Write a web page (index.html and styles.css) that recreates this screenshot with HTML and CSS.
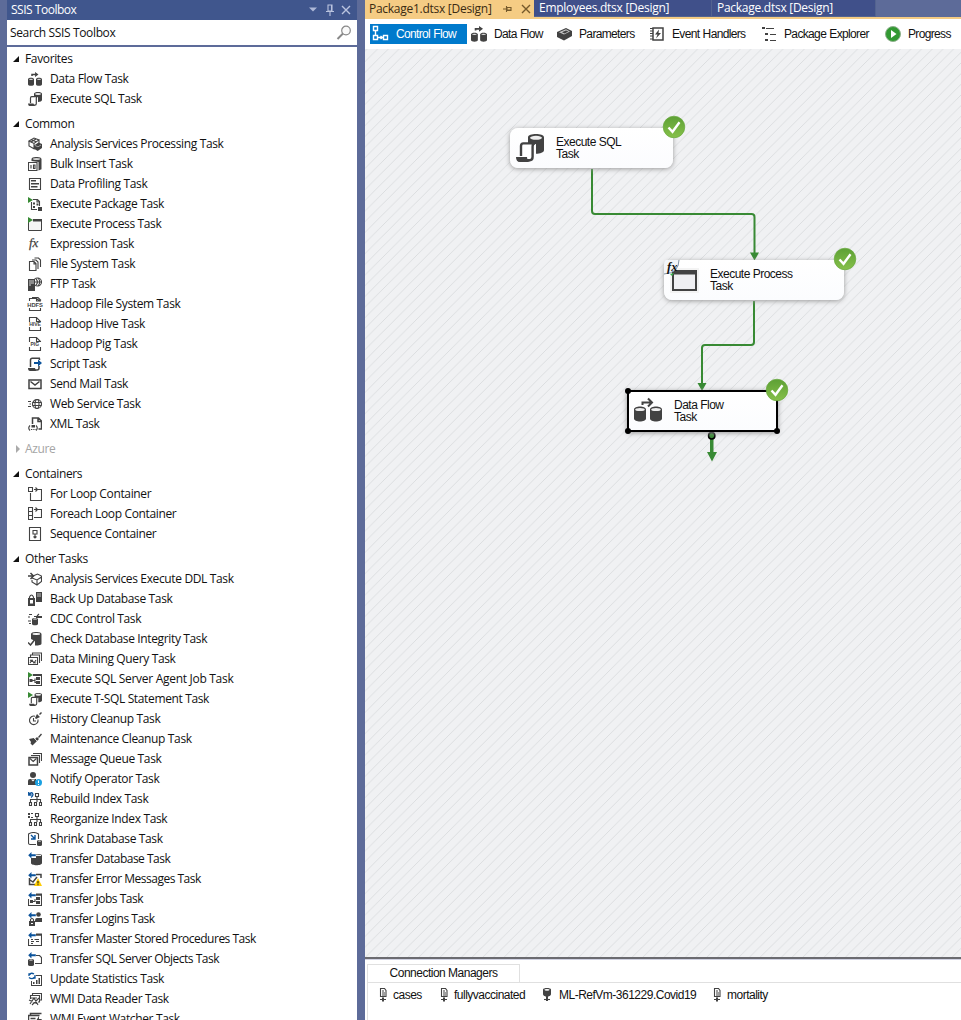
FILE: index.html
```html
<!DOCTYPE html>
<html lang="en">
<head>
<meta charset="utf-8">
<title>SSIS Designer</title>
<link rel="stylesheet" href="styles.css">
</head>
<body>
<svg class="defs" width="0" height="0">
  <defs>
    <linearGradient id="ok" x1="0" y1="0" x2="0" y2="1"><stop offset="0" stop-color="#5da035"/><stop offset="1" stop-color="#86c04a"/></linearGradient>
    <pattern id="hatch" width="10.667" height="10.667" patternUnits="userSpaceOnUse"><path d="M-2 12.667L12.667-2M-2 2L2-2M8.667 12.667l4-4" stroke="#d9dbdd" stroke-width=".9"/></pattern>
  </defs>
  <symbol id="arrow" viewBox="0 0 7 6"><path d="M7 2H3V0L0 3l3 3V4h4z" fill="#0b539b"/></symbol>
  <symbol id="dataflow" viewBox="0 0 14 14"><path d="M4 4V2.500h4" class="s2"/><path d="M7 0l3.500 2.500L7 5V3.400L8 2.500 7 1.600z"/><path d="M0 7.300c0-2 6-2 6 0v5c0 2-6 2-6 0zM8 7.300c0-2 6-2 6 0v5c0 2-6 2-6 0z"/><ellipse cx="3" cy="7.300" rx="2" ry=".6" fill="#ddd"/><ellipse cx="11" cy="7.300" rx="2" ry=".6" fill="#ddd"/></symbol>
  <symbol id="sql" viewBox="0 0 14 14"><path d="M6 1.700C6-.5 14-.5 14 1.700V8c0 1.300-2 1.900-4 1.900V5H6z"/><ellipse cx="10" cy="1.900" rx="3" ry="1" fill="#eee"/><path d="M2.500 11V6q0-1.300 1.200-1.300H9.500q-1.200.2-1.200 1.500v5.200q0 1.700-1.400 1.700H1.200" fill="#fff" stroke="#424242" stroke-width="1.200"/><path d="M0 11.500h5.500q0 1.700 1.700 1.900L6 14H2Q0 14 0 11.500z"/></symbol>
  <symbol id="cube" viewBox="0 0 14 14"><path d="M1 4l5-3 5 2-5 3.400zM1 4v5l5 2.800V6.400M11 3v4" class="s"/><path d="M3 2.600l5 2.200M8 2L3 5" class="s"/><path d="M6 8.400l4.500-3L14 7v4l-4.300 3L6 11.700z"/><path d="M7 8.500l3 1.300L13 8" stroke="#fff" stroke-width=".5" fill="none"/></symbol>
  <symbol id="bulk" viewBox="0 0 14 14"><path d="M3.500 4V2c0-2.700 10-2.700 10 0v10.200l-3 1.300V5z"/><ellipse cx="8.500" cy="2" rx="3.800" ry=".8" fill="#fff"/><path d="M.5 5.500h8.500v8H.5zM3 8v3.500" class="s"/><path d="M5.500 8h1.500v3.500H5.500z" class="s"/></symbol>
  <symbol id="profile" viewBox="0 0 14 14"><path d="M1.500 1.500h11v11h-11z" class="s"/><path d="M3 3h5v1.500H3zM3 6h8v1.500H3zM3 9h6.500v1.500H3z"/></symbol>
  <symbol id="play" viewBox="0 0 5 6"><path d="M0 0l5 3L0 6z" fill="#388a34"/></symbol>
  <symbol id="package" viewBox="0 0 14 14"><path d="M3.500 5v7.500H9M5 2.500h4.500l2 2V9M9 2.500V5h3" class="s"/><path d="M5 5.500h2v2H5zM8.500 6.500h2v2h-2zM5 9h2v2H5zM10 10h4v4h-4z"/><use href="#play" width="5" height="6"/></symbol>
  <symbol id="process" viewBox="0 0 14 14"><path d="M.5 5v8.500h13V3H5" fill="#f5f5f5" stroke="#424242"/><path d="M5 2h9v2.500H5z"/><use href="#play" width="5" height="6"/></symbol>
  <symbol id="files" viewBox="0 0 14 14"><path d="M1.500 4.500h4.500l2 2v7h-6.500zM6 4.500v2.500h2M4 3h4l2 2v7M6.500 1h4l2 2v7" class="s"/></symbol>
  <symbol id="ftp" viewBox="0 0 14 14"><circle cx="9.500" cy="5" r="4" class="s"/><path d="M7 5h6M10 1q3.500 4 0 8M8 2q3 3 0 6" class="s"/><path d="M0 2h7v12H0z"/><path d="M1 4h5M1 6h5M1 8h2" stroke="#fff" stroke-width=".8"/></symbol>
  <symbol id="script" viewBox="0 0 14 14"><path d="M2.500 10V3q0-1.700 1.700-1.700H12M11.500 3V1.500M11 9v2q0 2-2 2H2" class="s2"/><path d="M0 11h7l1 3H2q-2 0-2-3z"/><path d="M6 5h4V2.500L14 6l-4 3.500V7H6z" fill="#0b539b"/></symbol>
  <symbol id="mail" viewBox="0 0 14 14"><path d="M1 3h12v8.500H1z" class="s2"/><path d="M2.500 4.500L7 8l4.500-3.500" class="s2"/></symbol>
  <symbol id="web" viewBox="0 0 14 14"><circle cx="9" cy="7" r="4.500" class="s"/><ellipse cx="9" cy="7" rx="2" ry="4.500" class="s"/><path d="M4.500 5.500h9M4.500 8.500h9M0 4.500h3M1.500 7H3M0 9.500h3" class="s"/></symbol>
  <symbol id="xml" viewBox="0 0 14 14"><path d="M4.500 7V1h6l3 3v8h-3M10 1v3.500h3" class="s2"/><path d="M2 8.500Q-.5 11 2 13.500M8 8.500q2.500 2.500 0 5" class="s"/><path d="M3.500 8H7v2.500H3.500zM3 12h1v1H3zM4.700 12h1v1h-1zM6.500 12h1v1h-1z"/></symbol>
  <symbol id="for" viewBox="0 0 14 14"><path d="M.5.500h4v4h-4zM6 2.500h7.500v11h-11V6M7.500.500l2 2-2 2" class="s"/></symbol>
  <symbol id="foreach" viewBox="0 0 14 14"><path d="M.5.500h4v12h-4zM.5 4.500h4M.5 8.500h4M6 2.500h7.500v8H6M7.500.500l2 2-2 2" class="s"/></symbol>
  <symbol id="sequence" viewBox="0 0 14 14"><path d="M1.500.500h11v13h-11zM5 3.500h4v3.500H5zM7 7v4M5.500 9.500L7 11l1.500-1.500" class="s"/></symbol>
  <symbol id="ddl" viewBox="0 0 14 14"><path d="M5 4l4.500-2L13.500 4v5.500L9 13l-5-3V8M4 6l5 2 4.500-3M9 8v5" class="s"/><path d="M0 4h5M2.500 1l3 3-3 3" class="s2"/></symbol>
  <symbol id="backup" viewBox="0 0 14 14"><path d="M0 6h7v8H0z"/><path d="M1.500 6V5q2-4 4 0v1" class="s"/><path d="M2 8h3v3.500H2z" fill="#fff"/><path d="M8 0h6v10H8z"/><path d="M9 2h4M9 4h4" stroke="#fff" stroke-width=".7"/></symbol>
  <symbol id="cdc" viewBox="0 0 14 14"><path d="M1 2.500h3M0 5h2M0 9h3M1 11.500h2M6 4.500h7.500M9 4l2-2" class="s"/><path d="M4 7c0-1.500 6-1.500 6 0v5c0 1.700-6 1.700-6 0zM8 4h6v2H8z"/><ellipse cx="7" cy="7" rx="2" ry=".6" fill="#fff"/></symbol>
  <symbol id="check-db" viewBox="0 0 14 14"><path d="M3 2c0-2.700 10.500-2.700 10.500 0v9.500c0 2-5 2-6.500 2V9L3 7z"/><ellipse cx="8.300" cy="2" rx="3.800" ry=".9" fill="#fff"/><path d="M0 10.500l2.500 2.500L6.500 8" class="s2"/></symbol>
  <symbol id="mining" viewBox="0 0 14 14"><path d="M.5 5.500h9v7h-9zM2.500 5V3h9v8M4.500 3V1h9v8" class="s"/><path d="M2 11l2-3 2 3 2-3M2 8l6 3" class="s"/></symbol>
  <symbol id="agent" viewBox="0 0 14 14"><path d="M.5 5v8.500h13V3H5" class="s"/><path d="M5 2h9v2H5zM1.500 7h3v3h-3zM8 5h4v3H8zM8 9h4v3H8z"/><path d="M4 8.500h3M7 6.500v4h2" class="s"/><use href="#play" width="5" height="6"/></symbol>
  <symbol id="tsql" viewBox="0 0 14 14"><use href="#sql" x="1" y="1" width="13" height="13"/><use href="#play" width="5" height="6"/></symbol>
  <symbol id="history" viewBox="0 0 14 14"><path d="M10 7.500A4.300 4.300 0 1 1 7 4.200M5.500 6v3H8" class="s"/><path d="M7 6l2-4 3 3-4 2zM11 2l2-2 1 1-2 2z"/></symbol>
  <symbol id="maintenance" viewBox="0 0 14 14"><path d="M1 7l5-1 3 3-3 3-1.500 1.500-2-2L3 10z"/><path d="M7 7l2-2 2 2-2 2zM10 5l3-3.500 1 1L11 6z"/><path d="M5.500 5.500l4.500 4.500" stroke="#fff" stroke-width=".7"/></symbol>
  <symbol id="queue" viewBox="0 0 14 14"><path d="M1 5.500h8.500V13H1z" class="s2"/><path d="M2 6.500l3.200 3 3.200-3M3 3.500h8.500V11M5 1.500h8.500V9" class="s"/></symbol>
  <symbol id="operator" viewBox="0 0 14 14"><circle cx="5" cy="3" r="3"/><path d="M0 13V9q0-2 2-2h6v6z"/><path d="M3 7.500l2 2 2-2" fill="#fff"/><circle cx="10.500" cy="10.500" r="3.500" fill="#1ba1e2"/><path d="M10 8.500h1v2.500h-1zM10 12h1v1h-1z" fill="#fff"/></symbol>
  <symbol id="tree" viewBox="0 0 14 14"><path d="M7.500 1.500h3v3h-3zM1.500 10.500h2v3h-2zM6.500 10.500h2v3h-2zM11.500 10.500h2v3h-2zM9 5v5M2.500 10V7.500h10V10" class="s"/></symbol>
  <symbol id="rebuild" viewBox="0 0 14 14"><use href="#tree" width="14" height="14"/><path d="M.700 0v3h3M1 2.500Q4-1 5 2.500 5 4 3 5.500" fill="none" stroke="#0b539b" stroke-width="1.300"/></symbol>
  <symbol id="reorganize" viewBox="0 0 14 14"><use href="#tree" width="14" height="14"/><path d="M0 1h2v2H0zM3 1h2v1H3zM0 4h2v2H0zM3 5h2v1H3z"/></symbol>
  <symbol id="shrink" viewBox="0 0 14 14"><path d="M8 12.500H2Q.5 12.500.5 11V2Q3 .5 5.500.5t5 1.500v5" class="s"/><path d="M3 3l3.500 3.500M7 3v4H3" fill="none" stroke="#0b539b" stroke-width="1.400"/><path d="M9 9c0-1.500 5-1.500 5 0v4c0 1.300-5 1.300-5 0z"/><ellipse cx="11.500" cy="9" rx="1.500" ry=".5" fill="#fff"/></symbol>
  <symbol id="t-db" viewBox="0 0 14 14"><path d="M3 6h5V2.500q6-1 6 1V11c0 3-11 3-11 0z"/><path d="M8 3.500h5" stroke="#eee"/><use href="#arrow" width="8" height="6.500"/></symbol>
  <symbol id="t-error" viewBox="0 0 14 14"><path d="M1.500 6v6.500H7M8 2.500h5V6M2 8l3 2 4-5" class="s2"/><path d="M10 6l4 8H6z" fill="#fc0"/><path d="M9.500 9h1v2.500h-1zM9.500 12.200h1v1h-1z" fill="#111"/><use href="#arrow" width="8" height="6.500"/></symbol>
  <symbol id="t-jobs" viewBox="0 0 14 14"><path d="M.5 7v6.500h13V3H8" class="s"/><path d="M8 1.500h6v2H8zM2 8h3v3H2zM8 5h4v3H8zM8 9h4v3H8z"/><path d="M5 9.500h2V7" class="s"/><use href="#arrow" width="8" height="6.500"/></symbol>
  <symbol id="t-logins" viewBox="0 0 14 14"><circle cx="10.500" cy="2.500" r="2.300"/><path d="M7 9q0-3 2-3h5v4H7zM1 9h6v5H1z"/><path d="M2.500 9V7.500q1.500-2 3 0V9" class="s"/><path d="M3 11h2v1H3z" fill="#fff"/><use href="#arrow" width="8" height="6.500"/></symbol>
  <symbol id="t-master" viewBox="0 0 14 14"><path d="M.5 7v6.500h13V3H8M3 7.500h2M6.500 7.500H11M3 9.500h3M8 9.500h3M3 11.500h2" class="s"/><path d="M8 1.500h6v2H8z"/><use href="#arrow" width="8" height="6.500"/></symbol>
  <symbol id="t-objects" viewBox="0 0 14 14"><path d="M0 8c0-1.500 6-1.500 6 0v5c0 1.500-6 1.500-6 0z"/><path d="M8 3.500h3.500l2 2v6H7" class="s"/><ellipse cx="3" cy="8" rx="1.800" ry=".5" fill="#fff"/><use href="#arrow" width="8" height="6.500"/></symbol>
  <symbol id="stats" viewBox="0 0 14 14"><path d="M8 3h6v11H3V9h1v4h9V4H8zM5 10h1.500v2H5zM8 8h1.500v4H8zM10.500 6H12v6h-1.500z"/><path d="M1 4V2h2M1 3q2-3 5-1M7 3v3H5M7 5Q4 8 1 5.500" fill="none" stroke="#0b539b" stroke-width="1.300"/></symbol>
  <symbol id="wmi" viewBox="0 0 14 14"><path d="M4.500 4V1.500h9V8H11M2.500 7V3.500h9V10H10" class="s"/><path d="M2 12l4-6 4 7M1 8l9 4M4 13l7-7M2 6h7" class="s"/></symbol>
  <symbol id="wmi-event" viewBox="0 0 14 14"><path d="M2.500 3.500V1.500h11M6 12H.5V3.500h11M2.500 6.500h5M2.500 9h4" class="s2"/><path d="M11 4l-3 5h3l-1 4 4-6h-3z"/></symbol>
  <symbol id="control" viewBox="0 0 17 17"><path d="M1.500 1.500h4v4h-4zM1.500 10.500h4v4h-4zM11.500 10.500h4v4h-4zM3.500 6v4M6 12.500h4.500M8.500 11l2 1.500-2 1.500" fill="none" stroke="#fff" stroke-width="1.400"/></symbol>
  <symbol id="params" viewBox="0 0 16 14"><path d="M0 5l9-4 6 3v5l-8 4.500-7-3.500z"/><path d="M2 5.300l7-3L13 4.500 7 7.500z" fill="#c6c6c6"/><path d="M5 5.300l4-1.800 2.500 1-4 2z"/></symbol>
  <symbol id="events" viewBox="0 0 14 14"><path d="M3 1h10v12H3z" class="s2"/><path d="M0 1.500h3M0 4h3M0 6.500h3M0 9h3M0 12h3" class="s"/><path d="M9 2.500L5 7.500h2.500L6 11.500l5-5.500H8.500z"/></symbol>
  <symbol id="explorer" viewBox="0 0 14 14"><path d="M0 0h3v2H0zM3 6h3v2H3zM3 12h3v2H3z"/><path d="M4 1.500h8M8 7.500h6M8 13.500h6" class="s"/></symbol>
  <symbol id="progress" viewBox="0 0 16 16"><circle cx="8" cy="8" r="7.500" fill="#329932" stroke="#8eb08d"/><path d="M6 4l5.500 4L6 12z" fill="#fff"/></symbol>
  <symbol id="conn-file" viewBox="0 0 8 14"><path d="M1.500.5h4l1.500 2V8.500H1.500zM3 3h2M3 5h3M3 7h3M4 9v4M1 11.500h6" class="s"/><path d="M3 10h2v3.500H3z"/></symbol>
  <symbol id="conn-db" viewBox="0 0 8 14"><path d="M0 1.500c0-2 8-2 8 0V6c0 2-3 2.500-3 2.500V13H3V8.500S0 8 0 6z"/><ellipse cx="4" cy="1.800" rx="2.600" ry=".9" fill="#fff"/><path d="M1 11.500h6" class="s"/></symbol>
  <symbol id="done" viewBox="0 0 24 24"><circle cx="12" cy="12" r="10.800" fill="url(#ok)" stroke="#68a93d" stroke-width=".7"/><path d="M6.500 12.500l4 4.300 7-9.500" fill="none" stroke="#fff" stroke-width="2.400"/></symbol>
</svg>

<div class="app">
  <aside class="toolbox">
    <header class="titlebar"><span>SSIS Toolbox</span>
      <svg class="title-icons" viewBox="0 0 44 12"><path d="M0 3.500h8l-4 4z" fill="#aeb9d8"/><path d="M19 1h4v6h-4zM17 7.500h8M21 8v4M22.500 1v6" fill="none" stroke="#bac4df" stroke-width="1.100"/><path d="M33 2l8 8M41 2l-8 8" stroke="#bac4df" stroke-width="1.400"/></svg>
    </header>
    <div class="search"><span>Search SSIS Toolbox</span><svg width="16" height="16" viewBox="0 0 16 16"><circle cx="10" cy="5.500" r="4.300" fill="#fafafa" stroke="#888" stroke-width="1.200"/><path d="M7 8.500L1.500 14" stroke="#888" stroke-width="2"/></svg></div>
    <nav class="list">
      <section><h2>Favorites</h2><ul>
        <li><svg><use href="#dataflow"/></svg>Data Flow Task</li>
        <li><svg><use href="#sql"/></svg>Execute SQL Task</li>
      </ul></section>
      <section><h2>Common</h2><ul>
        <li><svg><use href="#cube"/></svg>Analysis Services Processing Task</li>
        <li><svg><use href="#bulk"/></svg>Bulk Insert Task</li>
        <li><svg><use href="#profile"/></svg>Data Profiling Task</li>
        <li><svg><use href="#package"/></svg>Execute Package Task</li>
        <li><svg><use href="#process"/></svg>Execute Process Task</li>
        <li><svg viewBox="0 0 14 14"><text class="fx" x="1" y="10">fx</text></svg>Expression Task</li>
        <li><svg><use href="#files"/></svg>File System Task</li>
        <li><svg><use href="#ftp"/></svg>FTP Task</li>
        <li><svg viewBox="0 0 14 14"><path d="M1.500 4V1.500h7l4 3M1.500 11v2.500h11V11M8.500 1.500V4h4M4 .5h6l3 3" class="s"/><text class="tag" x="-.8" y="10" font-size="5.800">HDFS</text></svg>Hadoop File System Task</li>
        <li><svg viewBox="0 0 14 14"><path d="M1.500 5V.5h7l4 4V5M1.500 10v3.500h11V10M8.500.5v4h4" class="s"/><text class="tag" x="1.200" y="9" font-size="5">HIVE</text></svg>Hadoop Hive Task</li>
        <li><svg viewBox="0 0 14 14"><path d="M1.500 5V.5h7l4 4V5M1.500 10v3.500h11V10M8.500.5v4h4" class="s"/><text class="tag" x="2.500" y="9" font-size="5">PIG</text></svg>Hadoop Pig Task</li>
        <li><svg><use href="#script"/></svg>Script Task</li>
        <li><svg><use href="#mail"/></svg>Send Mail Task</li>
        <li><svg><use href="#web"/></svg>Web Service Task</li>
        <li><svg><use href="#xml"/></svg>XML Task</li>
      </ul></section>
      <section class="closed"><h2>Azure</h2></section>
      <section><h2>Containers</h2><ul>
        <li><svg><use href="#for"/></svg>For Loop Container</li>
        <li><svg><use href="#foreach"/></svg>Foreach Loop Container</li>
        <li><svg><use href="#sequence"/></svg>Sequence Container</li>
      </ul></section>
      <section><h2>Other Tasks</h2><ul>
        <li><svg><use href="#ddl"/></svg>Analysis Services Execute DDL Task</li>
        <li><svg><use href="#backup"/></svg>Back Up Database Task</li>
        <li><svg><use href="#cdc"/></svg>CDC Control Task</li>
        <li><svg><use href="#check-db"/></svg>Check Database Integrity Task</li>
        <li><svg><use href="#mining"/></svg>Data Mining Query Task</li>
        <li class="wide"><svg><use href="#agent"/></svg>Execute SQL Server Agent Job Task</li>
        <li><svg><use href="#tsql"/></svg>Execute T-SQL Statement Task</li>
        <li><svg><use href="#history"/></svg>History Cleanup Task</li>
        <li><svg><use href="#maintenance"/></svg>Maintenance Cleanup Task</li>
        <li><svg><use href="#queue"/></svg>Message Queue Task</li>
        <li><svg><use href="#operator"/></svg>Notify Operator Task</li>
        <li><svg><use href="#rebuild"/></svg>Rebuild Index Task</li>
        <li><svg><use href="#reorganize"/></svg>Reorganize Index Task</li>
        <li><svg><use href="#shrink"/></svg>Shrink Database Task</li>
        <li class="tight"><svg><use href="#t-db"/></svg>Transfer Database Task</li>
        <li class="tight"><svg><use href="#t-error"/></svg>Transfer Error Messages Task</li>
        <li class="tight"><svg><use href="#t-jobs"/></svg>Transfer Jobs Task</li>
        <li class="tight"><svg><use href="#t-logins"/></svg>Transfer Logins Task</li>
        <li class="tight"><svg><use href="#t-master"/></svg>Transfer Master Stored Procedures Task</li>
        <li class="tight"><svg><use href="#t-objects"/></svg>Transfer SQL Server Objects Task</li>
        <li><svg><use href="#stats"/></svg>Update Statistics Task</li>
        <li><svg><use href="#wmi"/></svg>WMI Data Reader Task</li>
        <li><svg><use href="#wmi-event"/></svg>WMI Event Watcher Task</li>
      </ul></section>
    </nav>
  </aside>

  <main class="designer">
    <div class="doc-tabs">
      <div class="doc active"><span>Package1.dtsx [Design]</span><svg width="32" height="12" viewBox="0 0 32 12"><path d="M1 6h3M4.500 3v6M5 4.500h4v3H5zM5 7h4" fill="none" stroke="#75592b" stroke-width="1.100"/><path d="M20 2l8 8M28 2l-8 8" stroke="#75592b" stroke-width="1.400"/></svg></div>
      <div class="doc employees"><span>Employees.dtsx [Design]</span></div>
      <div class="doc package"><span>Package.dtsx [Design]</span></div>
    </div>
    <div class="modes">
      <div class="mode selected"><svg width="17" height="17"><use href="#control"/></svg><span>Control Flow</span></div>
      <div class="mode m-data"><svg width="16" height="16"><use href="#dataflow"/></svg><span>Data Flow</span></div>
      <div class="mode m-params"><svg width="16" height="14"><use href="#params"/></svg><span>Parameters</span></div>
      <div class="mode m-events"><svg width="14" height="14"><use href="#events"/></svg><span>Event Handlers</span></div>
      <div class="mode m-explorer"><svg width="14" height="14"><use href="#explorer"/></svg><span>Package Explorer</span></div>
      <div class="mode m-progress"><svg width="16" height="16"><use href="#progress"/></svg><span>Progress</span></div>
    </div>
    <div class="canvas">
      <svg class="wires" viewBox="365 49 596 908">
        <rect x="365" y="49" width="596" height="908" fill="url(#hatch)"/>
        <g fill="none" stroke="#388a34" stroke-width="2"><path d="M592 169v42q0 3 3 3h156.500q3 0 3 3v37"/><path d="M754 301v41q0 3-3 3h-46q-3 0-3 3v37"/></g>
        <g fill="#388a34"><path d="M750 252.500h9l-4.500 8zM697.500 383h9l-4.500 8z"/><path d="M710 438h3.500v14h3.500l-5 9.500-5-9.500h3z"/><circle cx="711.700" cy="435.800" r="3.200" stroke="#000" stroke-width="1.500"/></g>
      </svg>
      <div class="node n-sql"><svg class="pic" width="28" height="28"><use href="#sql"/></svg><span>Execute SQL<br>Task</span><svg class="done"><use href="#done"/></svg></div>
      <div class="node n-process"><svg class="pic" width="29" height="25" viewBox="0 0 29 25"><path fill="#f3f3f3" d="M0 0h29v25H0z"/><path d="M3 3h23v19H3z" fill="#efeff2" stroke="#424242" stroke-width="2"/><path d="M2 2h25v4.500H2z"/></svg><span>Execute Process<br>Task</span>
        <svg class="fx-badge" width="16" height="16" viewBox="0 0 16 16"><path d="M2 0h13q0 13-15 14V5q0-4 2-5z" fill="#f3f6fb"/><path d="M15 0q0 13-15 14" fill="none" stroke="#8293a7"/><path d="M6 14l4-1-2 3z" fill="#37b24a"/><text x="3" y="11" font-family="Liberation Serif, serif" font-style="italic" font-weight="bold" font-size="12.500" fill="#111">fx</text></svg>
        <svg class="done"><use href="#done"/></svg></div>
      <div class="node n-flow"><svg class="pic" width="29" height="26" viewBox="0 0 29 26"><path d="M8.500 7V4.500h9M14 .5l4 4-4 4" fill="none" stroke="#424242" stroke-width="2"/><path d="M0 11.500c0-4 12-4 12 0v9c0 4-12 4-12 0zM16 11.500c0-4 12-4 12 0v9c0 4-12 4-12 0z"/><ellipse cx="6" cy="11.500" rx="4.800" ry="1.600" fill="#eee"/><ellipse cx="22" cy="11.500" rx="4.800" ry="1.600" fill="#eee"/></svg><span>Data Flow<br>Task</span><i></i><i></i><i></i><svg class="done"><use href="#done"/></svg></div>
    </div>
    <div class="connections">
      <div class="conn-tab"><span>Connection Managers</span></div>
      <div class="conn-list">
        <div class="conn c1"><svg width="8" height="14"><use href="#conn-file"/></svg><span>cases</span></div>
        <div class="conn c2"><svg width="8" height="14"><use href="#conn-file"/></svg><span>fullyvaccinated</span></div>
        <div class="conn c3"><svg width="8" height="14"><use href="#conn-db"/></svg><span>ML-RefVm-361229.Covid19</span></div>
        <div class="conn c4"><svg width="8" height="14"><use href="#conn-file"/></svg><span>mortality</span></div>
      </div>
    </div>
  </main>
</div>
</body>
</html>
```

FILE: styles.css
```css
* { box-sizing: border-box; }
body { margin: 0; width: 961px; height: 1020px; overflow: hidden; background: #5d6b99; color: #111; font: 12px/20px "Open Sans", "Noto Sans", sans-serif; white-space: nowrap; }
svg { display: block; flex: none; fill: #424242; overflow: visible; }
.defs { position: absolute; }
.s { fill: none; stroke: #424242; stroke-width: 1.1; }
.s2 { fill: none; stroke: #424242; stroke-width: 1.5; }
.fx { font: italic 13px "Liberation Serif", serif; stroke: #424242; stroke-width: .25; letter-spacing: 0; }
.tag { font-family: "Liberation Sans", Arial, sans-serif; font-weight: bold; letter-spacing: 0; }
.app { display: flex; height: 1020px; padding-left: 7px; gap: 8px; }

.toolbox { width: 350px; display: flex; flex-direction: column; letter-spacing: -.36px; }
.titlebar { height: 20px; background: #40568d; color: #fff; padding: 0 5px 0 4px; display: flex; align-items: center; justify-content: space-between; letter-spacing: -.48px; }
.title-icons { width: 44px; height: 12px; margin-right: -1px; }
.search { height: 25px; margin-bottom: 2px; background: #fff; display: flex; align-items: center; justify-content: space-between; padding: 0 5px 0 3px; }
.list { flex: 1; min-height: 0; overflow: hidden; background: #fff; padding-top: 2px; }
section { padding-bottom: 5px; }
h2 { margin: 0; height: 20px; font: inherit; display: flex; align-items: center; gap: 6px; padding-left: 6px; }
h2::before { content: ""; width: 6px; height: 6px; background: #111; clip-path: polygon(100% 0, 100% 100%, 0 100%); }
.closed h2 { color: #a5a5a5; padding-left: 9px; gap: 5px; }
.closed h2::before { width: 4px; height: 8px; background: #aaa; clip-path: polygon(0 0, 100% 50%, 0 100%); }
ul { list-style: none; margin: 0; padding: 0; }
li { height: 20px; display: flex; align-items: center; gap: 8px; padding-left: 21px; }
li svg { width: 14px; height: 14px; }
.tight { letter-spacing: -.5px; }
.wide { letter-spacing: -.29px; }

.designer { flex: 1; min-width: 0; display: flex; flex-direction: column; background: #fff; }
.doc-tabs { height: 19px; display: flex; align-items: flex-start; background: #5d6b99; border-bottom: 2px solid #f5cc84; letter-spacing: -.27px; }
.doc { height: 17px; line-height: 16px; padding-left: 5px; background: #40508a; border-right: 1px solid #53638f; border-bottom: 1px solid #53638f; color: #fff; }
.doc.active { width: 169px; background: #f5cc84; border: 0; color: #3b2b12; display: flex; justify-content: space-between; padding: 0 0 0 4px; align-items: center; line-height: 18px; }
.doc.employees { width: 178px; }
.doc.package { width: 164px; }
.modes { height: 30px; display: flex; align-items: flex-start; padding: 5px 0 0 5px; font: 12px/18px "Liberation Sans", Arial, sans-serif; letter-spacing: -.65px; word-spacing: .5px; }
.mode { display: flex; align-items: center; gap: 7px; height: 19px; }
.mode.selected { background: #007acc; color: #fff; width: 97px; height: 20px; padding: 0 0 1px 2px; margin-right: 4px; }
.m-data { width: 86px; }
.m-params { width: 93px; gap: 6px; }
.m-events { width: 112px; gap: 8px; }
.m-explorer { width: 123px; gap: 8px; }

.canvas { position: relative; height: 908px; background: #f0f1f3; overflow: hidden; }
.wires { width: 596px; height: 908px; }
.node { position: absolute; height: 40px; border-radius: 8px; background: linear-gradient(#fff, #fbfcfe); box-shadow: 0 1px 5px #999; display: flex; align-items: center; font: 12px/12px "Liberation Sans", Arial, sans-serif; letter-spacing: -.5px; }
.n-sql { left: 145px; top: 79px; width: 163px; padding-left: 6px; gap: 12px; }
.n-process { left: 299px; top: 211px; width: 180px; padding-left: 6px; gap: 11px; }
.n-flow { left: 262px; top: 341px; width: 151px; height: 42px; border: 2px solid #000; border-radius: 1px; padding-left: 5px; gap: 11px; }
.done { position: absolute; right: -13px; top: -13px; width: 24px; height: 24px; }
.n-flow .done { top: -14px; }
.fx-badge { position: absolute; left: 0; top: 0; letter-spacing: 0; }
.n-flow i { position: absolute; width: 6px; height: 6px; border-radius: 3px; background: #000; }
.n-flow i:nth-of-type(1) { left: -4px; top: -4px; }
.n-flow i:nth-of-type(2) { left: -4px; bottom: -4px; }
.n-flow i:nth-of-type(3) { right: -4px; bottom: -4px; }

.connections { flex: 1; border-top: 2px solid #6b6b70; padding: 5px 0 0 2px; box-shadow: inset 0 1px #d0d2e2; font: 12px/16px "Liberation Sans", Arial, sans-serif; letter-spacing: -.5px; }
.conn-tab { width: 153px; height: 18px; border: 1px solid #e0e0e0; border-bottom: 0; text-align: center; }
.conn-list { height: 38px; border-top: 1px solid #e0e0e0; border-left: 1px solid #e0e0e0; display: flex; padding: 4px 0 0 11px; }
.conn { height: 16px; display: flex; align-items: center; gap: 6px; }
.c1 { width: 61px; }
.c2 { width: 103px; }
.c3 { width: 170px; gap: 8px; }
```
